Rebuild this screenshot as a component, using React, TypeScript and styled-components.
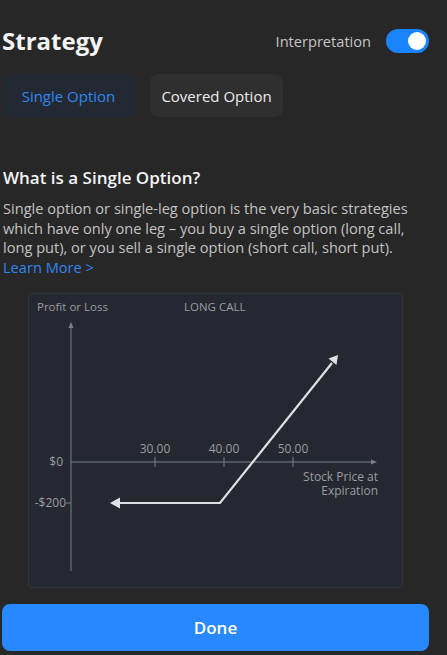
import { createGlobalStyle, styled } from 'styled-components';

const GlobalStyle = createGlobalStyle`
  html, body {
    margin: 0;
    padding: 0;
    background-color: #272727;
  }
  body {
    font-family: "Open Sans", "Noto Sans", sans-serif;
    color: #f2f2f2;
  }
`;

const Page = styled.div`
  width: 447px;
  height: 655px;
  box-sizing: border-box;
  padding: 26px 18px 0 2px;
  display: flex;
  flex-direction: column;
`;

const Header = styled.div`
  display: flex;
  align-items: center;
  justify-content: space-between;
  height: 29px;
`;

const Title = styled.h1`
  margin: 0;
  font-size: 24px;
  font-weight: 700;
  line-height: 29px;
  color: #f4f4f4;
`;

const ToggleWrap = styled.div`
  display: flex;
  align-items: center;
  gap: 15px;
`;

const ToggleLabel = styled.span`
  font-size: 14.6px;
  color: #c4c4c4;
`;

const Switch = styled.div<{ $on: boolean }>`
  width: 43px;
  height: 24px;
  border-radius: 12px;
  background-color: ${(p) => (p.$on ? '#1a84ff' : '#555')};
  position: relative;

  &::after {
    content: '';
    position: absolute;
    top: 3px;
    left: ${(p) => (p.$on ? '22px' : '3px')};
    width: 18px;
    height: 18px;
    border-radius: 50%;
    background: #fff;
  }
`;

const Tabs = styled.div`
  display: flex;
  gap: 15px;
  margin-top: 19px;
`;

const Tab = styled.div<{ $active?: boolean }>`
  width: 133px;
  height: 43px;
  border-radius: 8px;
  display: flex;
  align-items: center;
  justify-content: center;
  font-size: 15px;
  background-color: ${(p) => (p.$active ? '#232933' : '#2f2f2f')};
  color: ${(p) => (p.$active ? '#2f86f0' : '#ececec')};
`;

const Heading = styled.h2`
  margin: 50px 0 0 1px;
  font-size: 17px;
  font-weight: 600;
  line-height: 22px;
  color: #f4f4f4;
`;

const Paragraph = styled.p`
  margin: 10px 0 0 1px;
  font-size: 14.6px;
  line-height: 19.5px;
  color: #c2c2c2;
`;

const LearnMore = styled.a`
  color: #2f86f0;
  text-decoration: none;
`;

const ChartCard = styled.div`
  margin: 16px 0 0 26px;
  width: 375px;
  height: 295px;
  box-sizing: border-box;
  background-color: #252830;
  border: 1px solid #30333a;
  border-radius: 3px;
`;

const DoneButton = styled.button`
  margin-top: 16px;
  width: 427px;
  height: 47px;
  border: none;
  border-radius: 8px;
  background-color: #2888ff;
  color: #fff;
  font-family: inherit;
  font-size: 17px;
  font-weight: 600;
  cursor: pointer;
`;

const axis = '#7b7e86';
const label = '#9a9ca2';
const curve = '#dfe0e6';

const Chart = () => (
  <svg width="373" height="293" viewBox="29 293 373 293" fontFamily="Open Sans, sans-serif">
    <text x="37" y="310" fontSize="11.5" fill={label}>Profit or Loss</text>
    <text x="184" y="310" fontSize="11.5" fill={label}>LONG CALL</text>

    <line x1="71" y1="325" x2="71" y2="570" stroke={axis} strokeWidth="1" />
    <polygon points="71,321 68.5,327 73.5,327" fill={axis} />
    <line x1="71" y1="461" x2="374" y2="461" stroke={axis} strokeWidth="1" />
    <polygon points="377,461 371,458.5 371,463.5" fill={axis} />

    {[155, 224, 293].map((x) => (
      <line key={x} x1={x} y1="456" x2={x} y2="466" stroke={axis} />
    ))}
    <line x1="66" y1="502" x2="71" y2="502" stroke={axis} />

    <text x="155" y="452" fontSize="12" fill={label} textAnchor="middle">30.00</text>
    <text x="224" y="452" fontSize="12" fill={label} textAnchor="middle">40.00</text>
    <text x="293" y="452" fontSize="12" fill={label} textAnchor="middle">50.00</text>
    <text x="63" y="465" fontSize="12" fill={label} textAnchor="end">$0</text>
    <text x="66" y="506" fontSize="12" fill={label} textAnchor="end">-$200</text>
    <text x="378" y="480" fontSize="12" fill={label} textAnchor="end">Stock Price at</text>
    <text x="378" y="494" fontSize="12" fill={label} textAnchor="end">Expiration</text>

    <polyline points="118,502 220,502 332,362" fill="none" stroke={curve} strokeWidth="2.2" strokeLinejoin="miter" />
    <polygon points="110,502 120,496.5 120,507.5" fill={curve} />
    <polygon points="338,354 328.5,357.5 336.5,364" fill={curve} />
  </svg>
);

const App = () => (
  <>
    <GlobalStyle />
    <Page>
      <Header>
        <Title>Strategy</Title>
        <ToggleWrap>
          <ToggleLabel>Interpretation</ToggleLabel>
          <Switch $on />
        </ToggleWrap>
      </Header>
      <Tabs>
        <Tab $active>Single Option</Tab>
        <Tab>Covered Option</Tab>
      </Tabs>
      <Heading>What is a Single Option?</Heading>
      <Paragraph>
        Single option or single-leg option is the very basic strategies which have only one leg – you buy a
        single option (long call, long put), or you sell a single option (short call, short put).
        <br />
        <LearnMore href="#">Learn More &gt;</LearnMore>
      </Paragraph>
      <ChartCard>
        <Chart />
      </ChartCard>
      <DoneButton>Done</DoneButton>
    </Page>
  </>
);

export default App;
